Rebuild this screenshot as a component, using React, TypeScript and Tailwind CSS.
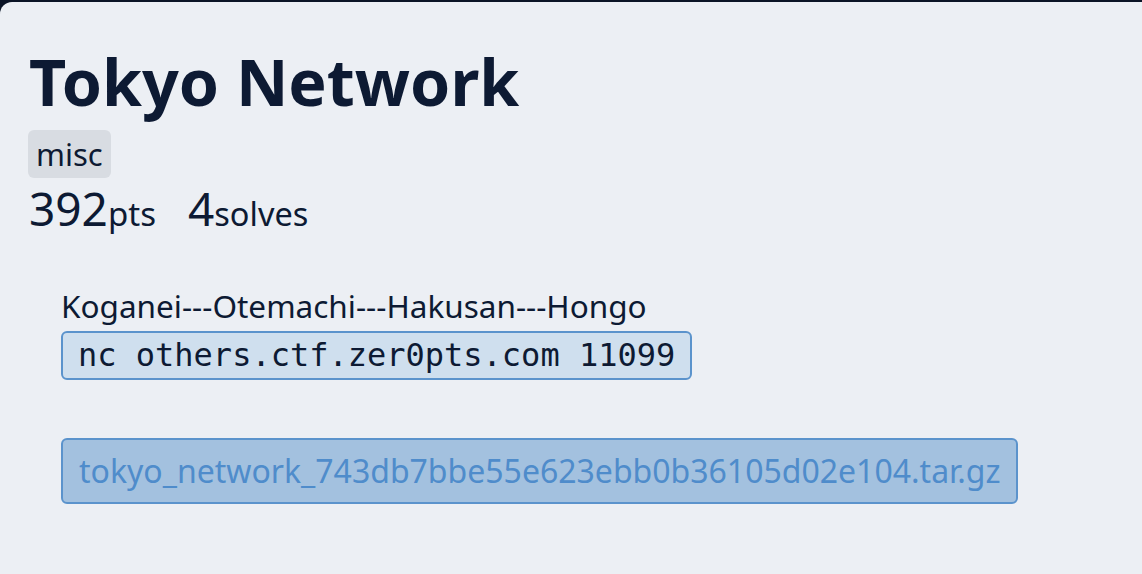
export default function App() {
  return (
    <div className="min-h-screen bg-[#0b1426] pt-[2px]" style={{ fontFamily: '"Noto Sans", sans-serif' }}>
      <div className="min-h-[572px] rounded-tl-[12px] bg-[#eceff4] pl-[28px] pt-[39px] text-[#0d1a33]">
        <h1 className="pl-[1px] text-[64.5px] font-bold leading-[80px]">Tokyo Network</h1>
        <div className="mt-[9px] inline-block rounded-[6px] bg-[#d8dce2] px-[8px] text-[31px] leading-[48px]">misc</div>
        <div className="flex items-baseline leading-[60px]">
          <span className="pl-[1px] text-[46px]">392</span>
          <span className="text-[33px]">pts</span>
          <span className="ml-[32px] text-[46px]">4</span>
          <span className="text-[32.5px]">solves</span>
        </div>
        <div className="ml-[33px] mt-[44px]">
          <p className="text-[31.5px] leading-[36px]">Koganei---Otemachi---Hakusan---Hongo</p>
          <div className="mt-[7px] flex">
            <div className="rounded-[6px] border-2 border-[#5b93cc] bg-[#cfdfee] px-[15px] text-[32px] leading-[45px]" style={{ fontFamily: '"DejaVu Sans Mono", monospace' }}>
              nc others.ctf.zer0pts.com 11099
            </div>
          </div>
          <div className="mt-[58px] flex">
            <a className="rounded-[6px] border-2 border-[#5b93cc] bg-[#a3c1df] px-[16px] text-[32px] leading-[62px] text-[#4f8ccb]">
              tokyo_network_743db7bbe55e623ebb0b36105d02e104.tar.gz
            </a>
          </div>
        </div>
      </div>
    </div>
  );
}
